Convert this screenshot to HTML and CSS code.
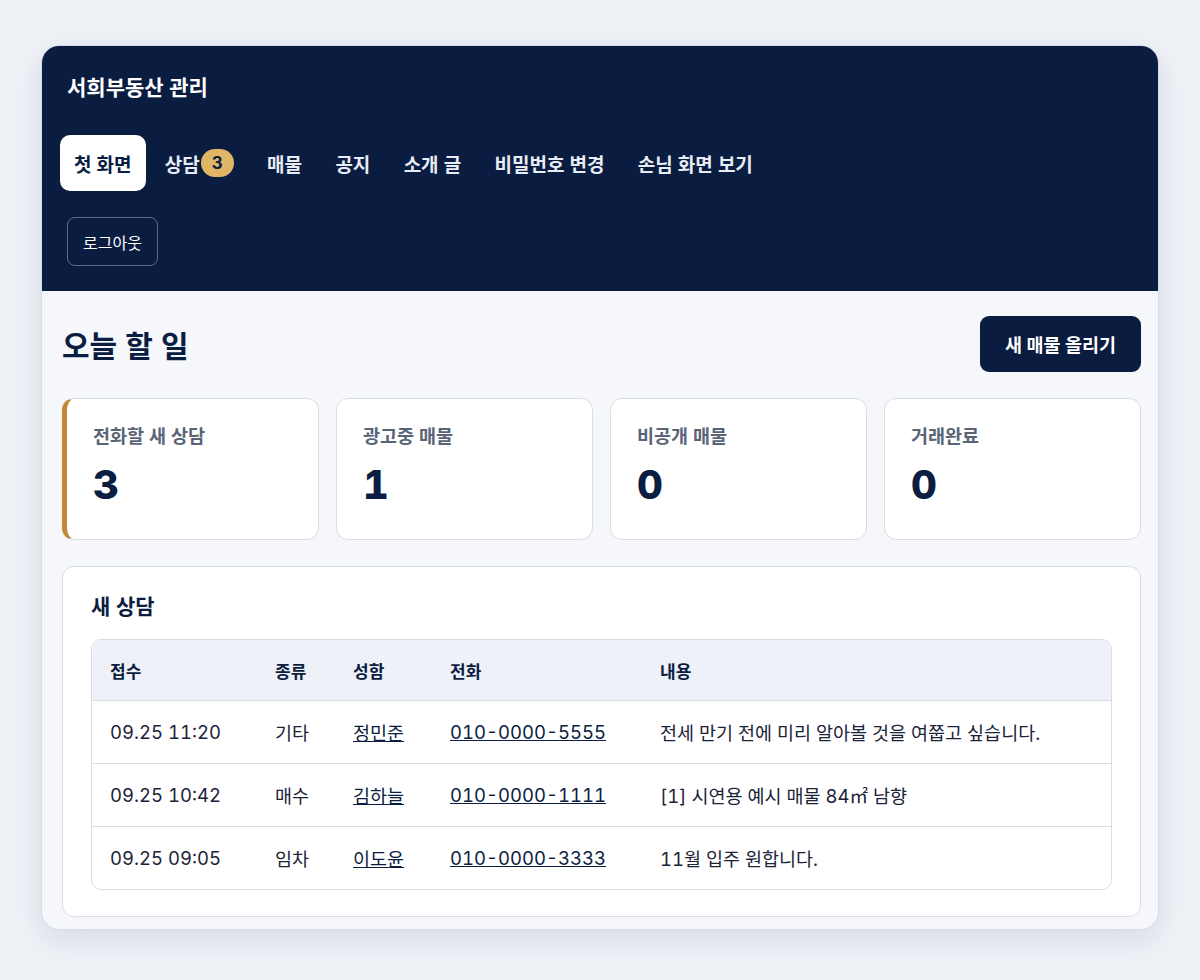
FILE: index.html
```html
<!DOCTYPE html>
<html lang="ko">
<head>
  <meta charset="UTF-8">
  <meta name="viewport" content="width=device-width, initial-scale=1.0">
  <title>서희부동산 관리</title>
  <link rel="stylesheet" href="styles.css">
</head>
<body>
  <div class="shell">
    <header class="top">
      <div class="brand">서희부동산 관리</div>
      <nav class="nav">
        <a class="nav-link active" href="#">첫 화면</a>
        <a class="nav-link" href="#">상담<span class="badge">3</span></a>
        <a class="nav-link" href="#">매물</a>
        <a class="nav-link" href="#">공지</a>
        <a class="nav-link" href="#">소개 글</a>
        <a class="nav-link" href="#">비밀번호 변경</a>
        <a class="nav-link" href="#">손님 화면 보기</a>
      </nav>
      <div class="logout-row">
        <button class="logout">로그아웃</button>
      </div>
    </header>

    <main class="content">
      <div class="page-head">
        <h1>오늘 할 일</h1>
        <button class="primary">새 매물 올리기</button>
      </div>

      <div class="stats">
        <div class="stat accent">
          <div class="stat-label">전화할 새 상담</div>
          <div class="stat-value">3</div>
        </div>
        <div class="stat">
          <div class="stat-label">광고중 매물</div>
          <div class="stat-value">1</div>
        </div>
        <div class="stat">
          <div class="stat-label">비공개 매물</div>
          <div class="stat-value">0</div>
        </div>
        <div class="stat">
          <div class="stat-label">거래완료</div>
          <div class="stat-value">0</div>
        </div>
      </div>

      <section class="panel">
        <h2>새 상담</h2>
        <div class="table-wrap">
          <table>
            <thead>
              <tr>
                <th class="c-date">접수</th>
                <th class="c-kind">종류</th>
                <th class="c-name">성함</th>
                <th class="c-tel">전화</th>
                <th>내용</th>
              </tr>
            </thead>
            <tbody>
              <tr>
                <td>09.25 11:20</td>
                <td>기타</td>
                <td><a href="#">정민준</a></td>
                <td><a href="#">010-0000-5555</a></td>
                <td>전세 만기 전에 미리 알아볼 것을 여쭙고 싶습니다.</td>
              </tr>
              <tr>
                <td>09.25 10:42</td>
                <td>매수</td>
                <td><a href="#">김하늘</a></td>
                <td><a href="#">010-0000-1111</a></td>
                <td>[1] 시연용 예시 매물 84㎡ 남향</td>
              </tr>
              <tr>
                <td>09.25 09:05</td>
                <td>임차</td>
                <td><a href="#">이도윤</a></td>
                <td><a href="#">010-0000-3333</a></td>
                <td>11월 입주 원합니다.</td>
              </tr>
            </tbody>
          </table>
        </div>
      </section>
    </main>
  </div>
</body>
</html>
```

FILE: styles.css
```css
body {
  margin: 0;
  padding: 45px 41px 52px;
  background-color: #eef1f6;
  font-family: Inter, "Noto Sans CJK KR", sans-serif;
  font-variant-numeric: tabular-nums;
  color: #0b1d40;
}
.shell {
  background: #f5f7fb;
  border: 1px solid #d6dbe6;
  border-radius: 18px;
  overflow: hidden;
  box-shadow: 0 10px 30px rgba(20, 35, 70, 0.10);
}
.top {
  background: #0a1c40;
  padding: 28px 26px 25px 25px;
}
.brand {
  color: #ffffff;
  font-size: 21px;
  font-weight: 700;
  line-height: 28px;
}
.nav {
  display: flex;
  flex-wrap: wrap;
  gap: 5.3px;
  margin: 33px 0 0 -7px;
}
.nav-link {
  display: flex;
  align-items: center;
  height: 56px;
  padding: 0 14px;
  border-radius: 10px;
  color: #e8ecf4;
  font-size: 19px;
  font-weight: 700;
  text-decoration: none;
}
.nav-link.active {
  background: #ffffff;
  color: #0a1c40;
}
.badge {
  display: inline-flex;
  align-items: center;
  justify-content: center;
  min-width: 33px;
  height: 28px;
  margin-left: 1px;
  border-radius: 14px;
  background: #e0b566;
  color: #0a1c40;
  font-size: 17px;
  font-weight: 700;
}
.logout-row {
  margin-top: 26px;
}
.logout {
  height: 49px;
  padding: 0 15px;
  background: transparent;
  border: 1px solid rgba(255, 255, 255, 0.35);
  border-radius: 8px;
  color: #ffffff;
  font-family: inherit;
  font-size: 16px;
}
.content {
  padding: 25px 17px 12px 20px;
}
.page-head {
  display: flex;
  align-items: center;
  justify-content: space-between;
}
h1 {
  margin: 0;
  font-size: 30px;
  font-weight: 700;
}
.primary {
  height: 56px;
  padding: 0 25px;
  background: #0a1c40;
  border: none;
  border-radius: 9px;
  color: #ffffff;
  font-family: inherit;
  font-size: 18.5px;
  font-weight: 700;
}
.stats {
  display: grid;
  grid-template-columns: repeat(4, 1fr);
  gap: 17px;
  margin-top: 26px;
}
.stat {
  background: #ffffff;
  border: 1px solid #d8dde8;
  border-radius: 12px;
  padding: 24px 26px 30px;
}
.stat.accent {
  border-left: 5px solid #c08a35;
}
.stat-label {
  color: #5a6477;
  font-size: 18.5px;
  font-weight: 600;
  line-height: 26px;
}
.stat-value {
  margin-top: 12px;
  font-size: 40px;
  font-weight: 800;
  line-height: 48px;
}
.panel {
  margin-top: 26px;
  background: #ffffff;
  border: 1px solid #d8dde8;
  border-radius: 12px;
  padding: 26px 28px 26px;
}
h2 {
  margin: 0 0 18px;
  font-size: 21px;
  font-weight: 700;
  line-height: 28px;
}
.table-wrap {
  border: 1px solid #d8dde8;
  border-radius: 10px;
  overflow: hidden;
}
table {
  width: 100%;
  border-collapse: collapse;
}
th {
  background: #eef1f8;
  height: 60px;
  padding: 0 18px;
  text-align: left;
  font-size: 17px;
  font-weight: 700;
}
td {
  height: 62px;
  padding: 0 18px;
  border-top: 1px solid #d8dde8;
  font-size: 18.5px;
  color: #1b2437;
}
td a {
  color: #0b1d40;
  text-decoration: underline;
}
.c-date { width: 129px; }
.c-kind { width: 42px; }
.c-name { width: 61px; }
.c-tel { width: 174px; }
```
